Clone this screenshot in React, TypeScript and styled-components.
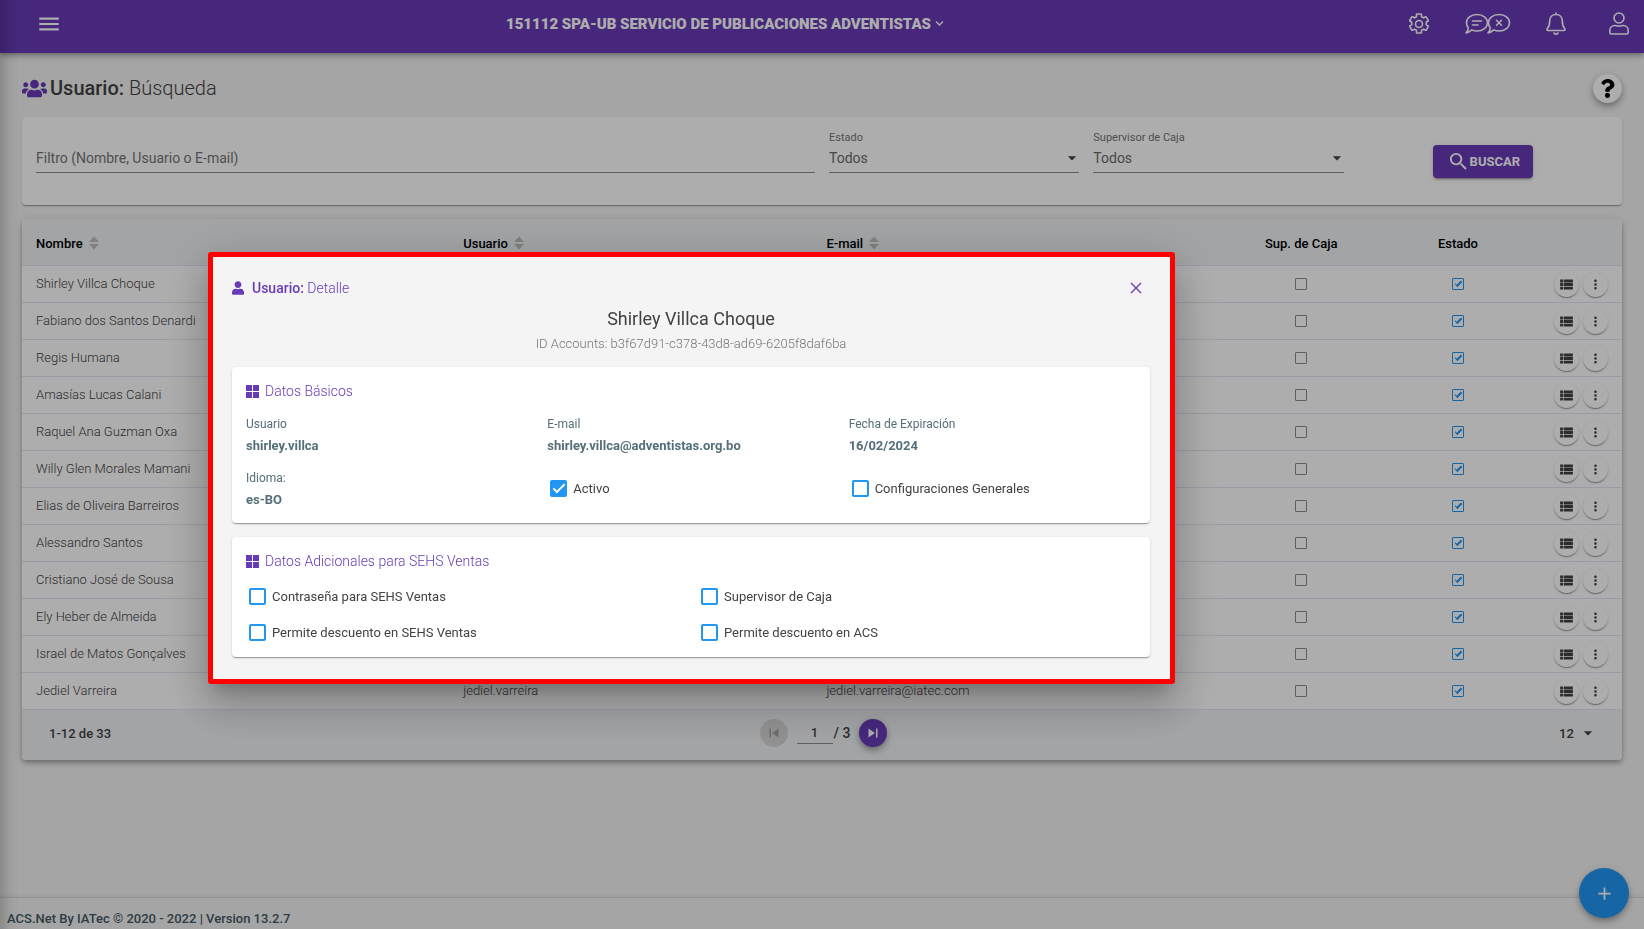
import React from "react";
import styled, { createGlobalStyle, css } from "styled-components";
import { FaUsers, FaUser, FaQuestion, FaChevronDown } from "react-icons/fa";
import {
  MdMenu,
  MdSearch,
  MdViewList,
  MdMoreVert,
  MdSkipPrevious,
  MdSkipNext,
  MdArrowDropDown,
  MdAdd,
} from "react-icons/md";

const color = {
  primary: "#673ab7",
  accent: "#2196f3",
  page: "#f4f4f4",
  head: "#eff2f5",
  text: "#424242",
  muted: "#757575",
  slate: "#546e7a",
  line: "#e4e4f5",
};

const cardShadow =
  "0 2px 1px -1px rgba(0,0,0,.2), 0 1px 1px 0 rgba(0,0,0,.14), 0 1px 3px 0 rgba(0,0,0,.12)";
const raisedShadow =
  "0 3px 5px -1px rgba(0,0,0,.2), 0 5px 8px 0 rgba(0,0,0,.14), 0 1px 10px 0 rgba(0,0,0,.12)";

const GlobalStyle = createGlobalStyle`
  *, *::before, *::after { box-sizing: border-box; }
  body { margin: 0; background: ${color.page}; }
  body, button, input, select, table { font-family: Roboto, "Liberation Sans", sans-serif; font-size: 13px; color: ${color.text}; }
  button { border: 0; padding: 0; cursor: pointer; background: none; }
  svg { display: block; flex: none; }
  h1, h2, h3, p, dl, dd { margin: 0; }
`;

const Page = styled.div`
  min-height: 100vh;
  display: flex;
  flex-direction: column;
`;

/* Edge shade cast by the collapsed side navigation */
const NavShade = styled.div`
  position: fixed;
  inset: 0 auto 0 0;
  width: 20px;
  background: linear-gradient(to right, rgba(0, 0, 0, 0.16), rgba(0, 0, 0, 0.05) 50%, transparent);
  pointer-events: none;
`;

const TopBar = styled.header`
  height: 53px;
  display: grid;
  grid-template-columns: auto 1fr auto;
  align-items: center;
  padding: 0 15px 6px 36px;
  background: ${color.primary};
  color: #fff;
  box-shadow: 0 2px 4px -1px rgba(0, 0, 0, 0.2), 0 4px 5px rgba(0, 0, 0, 0.14), 0 1px 10px rgba(0, 0, 0, 0.12);
`;

const BarButton = styled.button`
  display: flex;
  align-items: center;
  color: inherit;
`;

const Company = styled(BarButton)`
  justify-self: center;
  gap: 4px;
  padding-right: 20px;
  font-size: 15px;
  line-height: 20px;
  font-weight: 900;
`;

const BarActions = styled.div`
  display: flex;
  justify-content: flex-end;
  align-items: center;
  gap: 35px;
`;

const ProfileButton = styled(BarButton)`
  padding-left: 8px;
`;

const Main = styled.main`
  flex: 1;
  display: flex;
  flex-direction: column;
  gap: 14px;
  padding: 20px 22px;
`;

const TitleRow = styled.div`
  display: flex;
  justify-content: space-between;
  align-items: center;
  height: 30px;
`;

const PageTitle = styled.h1`
  display: flex;
  align-items: center;
  gap: 3px;
  font-size: 20px;
  line-height: 28px;
  font-weight: 300;
  svg { color: ${color.primary}; }
  strong { font-weight: 500; }
`;

const RoundButton = styled.button<{ $size: number; $tone?: "primary" | "accent" | "off" }>`
  display: inline-flex;
  align-items: center;
  justify-content: center;
  width: ${(p) => p.$size}px;
  height: ${(p) => p.$size}px;
  border-radius: 50%;
  background: #fff;
  box-shadow: ${cardShadow};
  ${(p) => p.$tone === "primary" && css`background: ${color.primary}; color: #fff; box-shadow: ${raisedShadow};`}
  ${(p) => p.$tone === "accent" && css`background: ${color.accent}; color: #fff; box-shadow: ${raisedShadow};`}
  ${(p) => p.$tone === "off" && css`background: #d6d6d6; color: #a0a0a0; box-shadow: none;`}
`;

const HelpButton = styled(RoundButton)`
  color: #000;
  box-shadow: ${raisedShadow};
`;

const FilterCard = styled.form`
  display: grid;
  grid-template-columns: repeat(12, 1fr);
  column-gap: 14px;
  height: 88px;
  padding: 14px;
  border-radius: 4px;
  background: #fff;
  box-shadow: ${cardShadow};
`;

const Field = styled.div<{ $span: number }>`
  grid-column: span ${(p) => p.$span};
  position: relative;
  display: flex;
  flex-direction: column;
  height: 42px;
  border-bottom: 1px solid #8c8c8c;
  label { height: 14px; font-size: 11px; line-height: 14px; color: ${color.muted}; }
  svg { position: absolute; right: -3px; bottom: 4px; pointer-events: none; }
`;

const fieldText = css`
  height: 26px;
  width: 100%;
  border: 0;
  padding: 0;
  background: none;
  font-size: 14px;
  outline: 0;
`;

const TextInput = styled.input`
  ${fieldText}
  &::placeholder { color: ${color.muted}; opacity: 1; }
`;

const SelectInput = styled.select`
  ${fieldText}
  appearance: none;
  color: #6a6a6a;
`;

const HiddenLabel = styled.label`
  visibility: hidden;
`;

const SearchCell = styled.div`
  grid-column: span 2;
  display: flex;
  justify-content: center;
  padding-top: 14px;
`;

const SearchButton = styled.button`
  display: flex;
  align-items: center;
  height: 33px;
  padding: 0 13px 0 14px;
  border-radius: 4px;
  background: ${color.primary};
  color: #fff;
  font-size: 13px;
  font-weight: 700;
  box-shadow: 0 3px 1px -2px rgba(0, 0, 0, 0.2), 0 2px 2px rgba(0, 0, 0, 0.14), 0 1px 5px rgba(0, 0, 0, 0.12);
`;

const TableCard = styled.section`
  border-radius: 4px;
  overflow: hidden;
  background: #fff;
  box-shadow: 0 2px 4px -1px rgba(0, 0, 0, 0.2), 0 4px 5px rgba(0, 0, 0, 0.14), 0 1px 10px rgba(0, 0, 0, 0.12);
`;

const Table = styled.table`
  width: 100%;
  table-layout: fixed;
  border-collapse: separate;
  border-spacing: 0;
`;

const HeadCell = styled.th<{ $width?: string; $center?: boolean }>`
  width: ${(p) => p.$width ?? "auto"};
  height: 47px;
  padding: 2px 14px 0;
  background: ${color.head};
  border-bottom: 1px solid ${color.line};
  color: #000;
  font-weight: 500;
  text-align: ${(p) => (p.$center ? "center" : "left")};
`;

const SortLabel = styled.span`
  display: flex;
  align-items: center;
  gap: 6px;
`;

const Cell = styled.td<{ $center?: boolean }>`
  height: 37px;
  padding: 0 14px 2px;
  border-bottom: 1px solid ${color.line};
  font-weight: 300;
  text-align: ${(p) => (p.$center ? "center" : "left")};
`;

const ActionsCell = styled(Cell)`
  padding-bottom: 0;
`;

const RowActions = styled.div`
  display: flex;
  justify-content: flex-end;
  gap: 4px;
`;

const Check = styled.input<{ $size: number; $solid?: boolean }>`
  appearance: none;
  position: relative;
  flex: none;
  width: ${(p) => p.$size}px;
  height: ${(p) => p.$size}px;
  margin: 0;
  border: 1px solid #8c8c8c;
  border-radius: 1px;
  vertical-align: middle;
  &:checked { border-color: ${color.accent}; }
  &:checked::after {
    content: "";
    position: absolute;
    left: 2px;
    top: 2px;
    width: 7px;
    height: 4px;
    border-left: 1px solid ${color.accent};
    border-bottom: 2px solid ${color.accent};
    transform: rotate(-45deg);
  }
  ${(p) =>
    p.$solid &&
    css`
      border: 2px solid ${color.accent};
      border-radius: 2px;
      &:checked { background: ${color.accent}; }
      &:checked::after { left: 1px; top: 2px; width: 12px; height: 6px; border-width: 0 0 2px 2px; border-color: #fff; }
    `}
`;

const Pager = styled.div`
  display: grid;
  grid-template-columns: 1fr auto 1fr;
  align-items: center;
  height: 50px;
  padding: 0 24px 4px 27px;
  background: ${color.head};
  font-weight: 500;
`;

const PagerControls = styled.div`
  display: flex;
  align-items: center;
  gap: 9px;
`;

const PageInput = styled.input`
  width: 36px;
  height: 22px;
  padding: 0;
  border: 0;
  border-bottom: 1px solid #8c8c8c;
  background: none;
  font-size: 13px;
  font-weight: 500;
  text-align: center;
`;

const PageOf = styled.label`
  display: flex;
  align-items: center;
  gap: 1px;
  font-size: 14px;
`;

const PageSize = styled.div`
  justify-self: end;
  display: flex;
  align-items: center;
  gap: 4px;
  select { appearance: none; border: 0; padding: 0; background: none; font-weight: 500; }
`;

const Footer = styled.footer`
  height: 32px;
  padding: 12px 7px 0;
  border-top: 1px solid #dcdcdc;
  box-shadow: 0 -1px 4px rgba(0, 0, 0, 0.08);
  color: #455a64;
  font-weight: 500;
  line-height: 18px;
`;

const AddButton = styled(RoundButton)`
  position: fixed;
  right: 15px;
  bottom: 11px;
`;

const Backdrop = styled.div`
  position: fixed;
  inset: 0;
  background: rgba(0, 0, 0, 0.32);
`;

const Dialog = styled.section`
  position: fixed;
  top: 252px;
  left: 208px;
  right: calc(100% - 1175px);
  display: flex;
  flex-direction: column;
  gap: 14px;
  padding: 20px 20px 22px 19px;
  border: 5px solid #f00;
  border-radius: 3px;
  background: ${color.page};
  box-shadow: 0 11px 15px -7px rgba(0, 0, 0, 0.2), 0 24px 38px 3px rgba(0, 0, 0, 0.14),
    0 9px 46px 8px rgba(0, 0, 0, 0.12);
`;

const DialogHead = styled.div`
  display: flex;
  justify-content: space-between;
  align-items: center;
  height: 22px;
  padding-right: 8px;
  color: ${color.primary};
  button { color: inherit; }
`;

const DialogTitle = styled.h2`
  display: flex;
  align-items: center;
  gap: 8px;
  font-size: 14px;
  line-height: 20px;
  font-weight: 300;
  strong { font-weight: 500; }
  svg { width: 12px; }
`;

const Person = styled.div`
  text-align: center;
  margin: -7px 0 -3px;
  h3 { font-size: 18px; line-height: 26px; font-weight: 400; }
  p { font-size: 13px; line-height: 24px; font-weight: 300; color: ${color.muted}; }
`;

const Card = styled.section`
  padding: 14px 14px 12px;
  border-radius: 4px;
  background: #fff;
  box-shadow: ${cardShadow};
`;

const CardTitle = styled.h3`
  display: flex;
  align-items: center;
  gap: 6px;
  margin-bottom: 12px;
  font-size: 14px;
  line-height: 20px;
  font-weight: 300;
  color: ${color.primary};
`;

const Grid = styled.div<{ $columns: number }>`
  display: grid;
  grid-template-columns: repeat(${(p) => p.$columns}, 1fr);
  gap: 10px 14px;
`;

const Datum = styled.dl`
  height: 44px;
  color: ${color.slate};
  dt { font-size: 12px; line-height: 22px; }
  dd { font-size: 13px; line-height: 22px; font-weight: 700; }
`;

const CheckLabel = styled.label<{ $tall?: boolean }>`
  display: flex;
  align-items: center;
  gap: 6px;
  height: ${(p) => (p.$tall ? 42 : 26)}px;
  padding-left: 3px;
  font-size: 13px;
`;

const SortIcon = () => (
  <svg width="10" height="14" viewBox="0 0 10 14" fill="#bdbdbd" aria-hidden="true">
    <path d="M5 .5 10 6H0zM5 13.500 0 8h10z" />
  </svg>
);

const TilesIcon = () => (
  <svg width="13" height="13" viewBox="0 0 13 13" fill="currentColor" aria-hidden="true">
    <path d="M0 0h6v6H0zM7 0h6v6H7zM0 7h6v6H0zM7 7h6v6H7z" />
  </svg>
);

const CloseIcon = () => (
  <svg width="12" height="12" viewBox="0 0 12 12" stroke="currentColor" strokeWidth="1.300" aria-hidden="true">
    <path d="M1 1l10 10M11 1 1 11" />
  </svg>
);

const line = { fill: "none", stroke: "currentColor", strokeLinejoin: "round", strokeLinecap: "round" } as const;

const GearIcon = () => (
  <svg width="22" height="22" viewBox="0 0 22 22" strokeWidth="1.600" {...line}>
    <path d="M9 1h4c.3 0 .5.2.5.500V3.700c.8.3 1.500.7 2.100 1.200l1.900-1.100c.3-.2.600-.1.700.1l2 3.400c.2.300.1.600-.1.700l-1.900 1.200c.2.900.2 1.700 0 2.600l1.900 1.100c.2.200.3.500.1.700l-2 3.500c-.1.200-.4.300-.7.100l-1.900-1.100c-.6.500-1.300.9-2.100 1.200v2.200c0 .3-.2.500-.5.500H9c-.3 0-.5-.2-.5-.5v-2.200c-.8-.3-1.500-.7-2.100-1.200l-1.900 1.100c-.3.200-.6.100-.7-.1l-2-3.500c-.2-.2-.1-.5.1-.7l1.900-1.100c-.2-.9-.2-1.700 0-2.600L1.900 8c-.2-.1-.3-.4-.1-.7l2-3.400c.1-.2.4-.3.700-.1l1.900 1.100c.6-.5 1.300-.9 2.100-1.200V1.500c0-.3.200-.5.500-.5z" />
    <circle cx="11" cy="11" r="3.500" />
  </svg>
);

const ChatIcon = () => (
  <svg width="46" height="22" viewBox="0 0 46 22" strokeWidth="1.600" {...line}>
    <path d="M12 1.500c6 0 10.500 3.600 10.500 8.200S18 18 12 18c-2 0-3.700-.4-5.200-1.100C5 18.500 3 19.800 1 20c1.400-1.500 2.200-3.200 2.300-5C2 13.500 1.500 11.700 1.500 9.700 1.500 5.100 6 1.500 12 1.500z" />
    <path d="M34 1.500c6 0 10.500 3.600 10.500 8.200S40 18 34 18c-2 0-3.700-.4-5.200-1.100C27 18.500 25 19.800 23 20c1.400-1.500 2.200-3.200 2.300-5-1.300-1.500-1.800-3.300-1.800-5.300 0-4.600 4.500-8.200 10.500-8.200z" />
    <path d="M7.500 8h9M7.500 12h5.500M31.500 7.300l5 5M36.500 7.300l-5 5" />
  </svg>
);

const BellIcon = () => (
  <svg width="20" height="23" viewBox="0 0 20 23" strokeWidth="1.600" {...line}>
    <path d="M10 1v1.500M10 2.500c-3.800 0-6.300 2.800-6.300 6.500 0 4.700-1.200 6.300-2.400 7.600-.7.800-.2 1.900.8 1.900h15.800c1 0 1.500-1.100.8-1.900-1.200-1.300-2.400-2.900-2.400-7.600 0-3.700-2.500-6.500-6.300-6.500z" />
    <path d="M8 21c.5.800 1.200 1.200 2 1.200s1.500-.4 2-1.200" />
  </svg>
);

const PersonIcon = () => (
  <svg width="20" height="23" viewBox="0 0 20 23" strokeWidth="1.600" {...line}>
    <circle cx="10" cy="6" r="5" />
    <path d="M5.800 13.500c1.500 0 2.200.8 4.200.8s2.700-.8 4.200-.8c3 0 5 2.200 5 5v2c0 .9-.6 1.500-1.500 1.500H2.300c-.9 0-1.500-.6-1.500-1.500v-2c0-2.800 2-5 5-5z" />
  </svg>
);

interface User {
  name: string;
  login?: string;
  email?: string;
}

const users: User[] = [
  { name: "Shirley Villca Choque" },
  { name: "Fabiano dos Santos Denardi" },
  { name: "Regis Humana" },
  { name: "Amasías Lucas Calani" },
  { name: "Raquel Ana Guzman Oxa" },
  { name: "Willy Glen Morales Mamani" },
  { name: "Elias de Oliveira Barreiros" },
  { name: "Alessandro Santos" },
  { name: "Cristiano José de Sousa" },
  { name: "Ely Heber de Almeida" },
  { name: "Israel de Matos Gonçalves" },
  { name: "Jediel Varreira", login: "jediel.varreira", email: "jediel.varreira@iatec.com" },
];

const SelectField = ({ id, label }: { id: string; label: string }) => (
  <Field $span={2}>
    <label htmlFor={id}>{label}</label>
    <SelectInput id={id}>
      <option>Todos</option>
    </SelectInput>
    <MdArrowDropDown size={20} />
  </Field>
);

const Option = ({ label, checked, tall }: { label: string; checked?: boolean; tall?: boolean }) => (
  <CheckLabel $tall={tall}>
    <Check type="checkbox" $size={17} $solid defaultChecked={checked} />
    {label}
  </CheckLabel>
);

const Info = ({ label, value }: { label: string; value: string }) => (
  <Datum>
    <dt>{label}</dt>
    <dd>{value}</dd>
  </Datum>
);

export default function App() {
  return (
    <>
      <GlobalStyle />
      <Page>
        <TopBar>
          <BarButton aria-label="Menu">
            <MdMenu size={26} />
          </BarButton>
          <Company>
            151112 SPA-UB SERVICIO DE PUBLICACIONES ADVENTISTAS
            <FaChevronDown size={9} />
          </Company>
          <BarActions>
            <BarButton aria-label="Configuración"><GearIcon /></BarButton>
            <BarButton aria-label="Chat"><ChatIcon /></BarButton>
            <BarButton aria-label="Notificaciones"><BellIcon /></BarButton>
            <ProfileButton aria-label="Perfil"><PersonIcon /></ProfileButton>
          </BarActions>
        </TopBar>

        <Main>
          <TitleRow>
            <PageTitle>
              <FaUsers size={25} />
              <span><strong>Usuario:</strong> Búsqueda</span>
            </PageTitle>
            <HelpButton $size={29} aria-label="Ayuda">
              <FaQuestion size={19} />
            </HelpButton>
          </TitleRow>

          <FilterCard onSubmit={(e) => e.preventDefault()}>
            <Field $span={6}>
              <HiddenLabel htmlFor="filter" />
              <TextInput id="filter" placeholder="Filtro (Nombre, Usuario o E-mail)" />
            </Field>
            <SelectField id="status" label="Estado" />
            <SelectField id="supervisor" label="Supervisor de Caja" />
            <SearchCell>
              <SearchButton>
                <MdSearch size={23} />
                BUSCAR
              </SearchButton>
            </SearchCell>
          </FilterCard>

          <TableCard>
            <Table>
              <thead>
                <tr>
                  <HeadCell $width="26.7%"><SortLabel>Nombre <SortIcon /></SortLabel></HeadCell>
                  <HeadCell $width="22.7%"><SortLabel>Usuario <SortIcon /></SortLabel></HeadCell>
                  <HeadCell $width="25.6%"><SortLabel>E-mail <SortIcon /></SortLabel></HeadCell>
                  <HeadCell $width="9.9%" $center>Sup. de Caja</HeadCell>
                  <HeadCell $width="9.7%" $center>Estado</HeadCell>
                  <HeadCell />
                </tr>
              </thead>
              <tbody>
                {users.map((user) => (
                  <tr key={user.name}>
                    <Cell>{user.name}</Cell>
                    <Cell>{user.login}</Cell>
                    <Cell>{user.email}</Cell>
                    <Cell $center><Check type="checkbox" $size={12} aria-label="Sup. de Caja" /></Cell>
                    <Cell $center><Check type="checkbox" $size={12} defaultChecked aria-label="Estado" /></Cell>
                    <ActionsCell>
                      <RowActions>
                        <RoundButton $size={25} aria-label="Detalle"><MdViewList size={17} /></RoundButton>
                        <RoundButton $size={25} aria-label="Más opciones"><MdMoreVert size={15} /></RoundButton>
                      </RowActions>
                    </ActionsCell>
                  </tr>
                ))}
              </tbody>
            </Table>
            <Pager>
              <span>1-12 de 33</span>
              <PagerControls>
                <RoundButton $size={28} $tone="off" aria-label="Anterior"><MdSkipPrevious size={18} /></RoundButton>
                <PageOf>
                  <PageInput defaultValue="1" />
                  / 3
                </PageOf>
                <RoundButton $size={28} $tone="primary" aria-label="Siguiente"><MdSkipNext size={18} /></RoundButton>
              </PagerControls>
              <PageSize>
                <select aria-label="Filas por página"><option>12</option></select>
                <MdArrowDropDown size={20} />
              </PageSize>
            </Pager>
          </TableCard>
        </Main>

        <Footer>ACS.Net By IATec © 2020 - 2022 | Version 13.2.7</Footer>
        <AddButton $size={50} $tone="accent" aria-label="Agregar"><MdAdd size={21} /></AddButton>
        <NavShade />
      </Page>

      <Backdrop />
      <Dialog role="dialog" aria-labelledby="dialog-title">
        <DialogHead>
          <DialogTitle id="dialog-title">
            <FaUser size={14} />
            <span><strong>Usuario:</strong> Detalle</span>
          </DialogTitle>
          <button aria-label="Cerrar"><CloseIcon /></button>
        </DialogHead>
        <Person>
          <h3>Shirley Villca Choque</h3>
          <p>ID Accounts: b3f67d91-c378-43d8-ad69-6205f8daf6ba</p>
        </Person>
        <Card>
          <CardTitle><TilesIcon /> Datos Básicos</CardTitle>
          <Grid $columns={3}>
            <Info label="Usuario" value="shirley.villca" />
            <Info label="E-mail" value="shirley.villca@adventistas.org.bo" />
            <Info label="Fecha de Expiración" value="16/02/2024" />
            <Info label="Idioma:" value="es-BO" />
            <Option label="Activo" checked tall />
            <Option label="Configuraciones Generales" tall />
          </Grid>
        </Card>
        <Card>
          <CardTitle><TilesIcon /> Datos Adicionales para SEHS Ventas</CardTitle>
          <Grid $columns={2}>
            <Option label="Contraseña para SEHS Ventas" />
            <Option label="Supervisor de Caja" />
            <Option label="Permite descuento en SEHS Ventas" />
            <Option label="Permite descuento en ACS" />
          </Grid>
        </Card>
      </Dialog>
    </>
  );
}
